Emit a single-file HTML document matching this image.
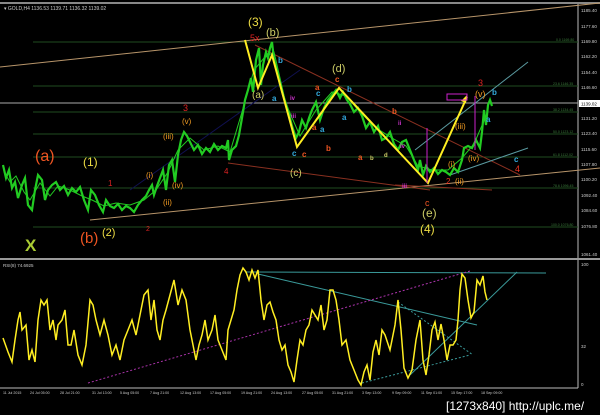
<!DOCTYPE html>
<html><head><style>
html,body{margin:0;padding:0;background:#000;width:600px;height:415px;overflow:hidden}
svg{display:block}
text{font-family:"Liberation Sans",sans-serif}
</style></head><body>
<svg width="600" height="415" viewBox="0 0 600 415" xmlns="http://www.w3.org/2000/svg">
<rect width="600" height="415" fill="#000"/>
<line x1="0" y1="3" x2="600" y2="3" stroke="#888" stroke-width="2"/>
<text x="4" y="10" fill="#ccc" font-size="5">▾ GOLD,H4 1136.53 1139.71 1136.32 1139.02</text>
<line x1="578" y1="4" x2="578" y2="388" stroke="#bbb" stroke-width="1"/>
<line x1="0" y1="259" x2="600" y2="259" stroke="#999" stroke-width="2"/>
<line x1="0" y1="388" x2="578" y2="388" stroke="#bbb" stroke-width="1"/>
<g fill="#ccc" font-size="4.5">
<text x="581" y="12">1185.40</text><text x="581" y="28">1177.60</text><text x="581" y="43">1169.80</text>
<text x="581" y="58">1162.20</text><text x="581" y="74">1154.40</text><text x="581" y="89">1146.60</text>
<text x="581" y="120">1131.20</text><text x="581" y="135">1123.40</text><text x="581" y="151">1115.60</text>
<text x="581" y="166">1107.80</text><text x="581" y="181">1100.20</text><text x="581" y="197">1092.40</text>
<text x="581" y="212">1084.60</text><text x="581" y="228">1076.80</text><text x="581" y="256">1061.40</text>
<text x="581" y="266">100</text><text x="581" y="348">32</text><text x="581" y="386">0</text>
</g>
<rect x="579" y="100" width="21" height="7" fill="#fff"/>
<text x="581" y="105.5" fill="#000" font-size="4.5">1139.02</text>
<g stroke="#1f4d1f" stroke-width="1">
<line x1="33" y1="42" x2="578" y2="42"/><line x1="33" y1="86" x2="578" y2="86"/>
<line x1="33" y1="112" x2="578" y2="112"/><line x1="33" y1="134" x2="578" y2="134"/>
<line x1="33" y1="157" x2="578" y2="157"/><line x1="33" y1="188" x2="578" y2="188"/>
<line x1="33" y1="227" x2="578" y2="227"/>
</g>
<g fill="#3a7a3a" font-size="3.5">
<text x="556" y="41">0.0 1169.80</text><text x="553" y="85">23.6 1146.35</text><text x="553" y="111">38.2 1134.45</text>
<text x="553" y="133">50.0 1123.12</text><text x="553" y="156">61.8 1112.02</text><text x="553" y="187">78.6 1096.45</text>
<text x="551" y="226">100.0 1076.80</text>
</g>
<line x1="0" y1="103" x2="578" y2="103" stroke="#aaa" stroke-width="1"/>
<g fill="none" stroke-width="1">
<line x1="0" y1="67" x2="600" y2="3" stroke="#b8956a"/>
<line x1="90" y1="220" x2="600" y2="168" stroke="#b8956a"/>
<line x1="255" y1="45" x2="520" y2="175" stroke="#8a3020"/>
<line x1="228" y1="163" x2="430" y2="190" stroke="#8a3020"/>
<line x1="395" y1="185" x2="492" y2="190" stroke="#8a3020"/>
<line x1="415" y1="150" x2="528" y2="62" stroke="#5a9aa0"/>
<line x1="450" y1="175" x2="528" y2="148" stroke="#5a9aa0"/>
<line x1="300" y1="70" x2="130" y2="190" stroke="#101050"/>
</g>
<polyline fill="none" stroke="#22cc22" stroke-width="2.2" points="3,165 6,178 9,170 12,188 15,182 18,198 22,185 25,178 28,205 32,210 35,190 38,175 42,180 45,200 48,190 52,185 56,182 60,190 64,186 68,195 72,188 76,192 80,187 84,200 88,210 91,190 95,195 99,205 103,212 106,200 110,206 114,208 118,204 122,210 126,206 130,208 134,212 138,205 142,200 146,196 149,190 152,185 154,195 157,186 160,178 163,170 166,190 169,165 172,160 175,182 178,155 181,140 184,132 187,136 190,142 194,150 198,145 202,154 206,148 210,152 214,144 218,150 222,146 226,148 228,140 229,160 232,150 236,146 239,135 242,118 245,100 248,90 251,78 253,92 256,60 259,48 261,85 263,65 266,52 268,58 270,48 272,42 274,60 277,70 280,84 284,98 288,110 292,126 296,138 299,132 302,120 306,128 309,118 312,110 316,102 320,120 324,108 328,100 332,95 336,90 340,98 343,92 347,100 350,104 354,112 358,108 362,116 366,128 370,122 374,132 378,126 382,140 386,138 390,132 394,144 398,150 402,142 406,140 410,150 414,160 418,170 420,160 423,175 426,166 430,172 434,168 438,174 442,170 446,172 450,175 454,168 458,172 462,160 464,148 468,146 472,148 476,140 480,148 482,132 484,110 486,125 488,105 490,100 492,106"/>
<polyline fill="none" stroke="#22cc22" stroke-width="1" points="4,172 10,182 16,176 24,192 30,200 40,183 50,196 58,186 70,190 82,196 92,200 104,206 116,203 130,205 144,200 156,190 168,172 178,150 190,138 204,150 218,146 230,152 242,112 254,70 264,58 274,52 286,104 300,136 316,110 332,92 346,96 360,112 376,128 392,138 406,146 418,166 432,170 448,170 462,158 474,144 486,116"/>
<polyline fill="none" stroke="#ffee22" stroke-width="2" points="245,40 258,88 272,55 297,147 339,88 428,183 467,97"/>
<polygon points="467,95 461,101 466,103" fill="#ffee22"/>
<line x1="427" y1="128" x2="427" y2="183" stroke="#cc22cc"/>
<line x1="475" y1="96" x2="475" y2="150" stroke="#cc22cc"/>
<rect x="447" y="94" width="20" height="6" fill="none" stroke="#cc22cc"/>
<g font-family="Liberation Serif,serif">
<text x="35" y="161" fill="#ee5522" font-size="16">(a)</text>
<text x="83" y="166" fill="#eedd44" font-size="12">(1)</text>
<text x="80" y="243" fill="#ee5522" font-size="15">(b)</text>
<text x="102" y="236" fill="#eedd44" font-size="11">(2)</text>
<text x="25" y="251" fill="#aacc33" font-size="17" font-weight="bold">X</text>
<text x="248" y="26" fill="#eedd44" font-size="12">(3)</text>
<text x="266" y="36" fill="#cccc66" font-size="11">(b)</text>
<text x="250" y="41" fill="#dd2222" font-size="9">5x</text>
<text x="252" y="98" fill="#cccc66" font-size="10">(a)</text>
<text x="290" y="176" fill="#cccc66" font-size="10">(c)</text>
<text x="332" y="72" fill="#cccc66" font-size="11">(d)</text>
<text x="422" y="217" fill="#cccc66" font-size="12">(e)</text>
<text x="420" y="233" fill="#eedd44" font-size="12">(4)</text>
<text x="183" y="111" fill="#dd2222" font-size="9">3</text>
<text x="182" y="124" fill="#ee9922" font-size="8">(v)</text>
<text x="163" y="139" fill="#ee9922" font-size="8">(iii)</text>
<text x="146" y="178" fill="#ee9922" font-size="8">(i)</text>
<text x="172" y="188" fill="#ee9922" font-size="8">(iv)</text>
<text x="163" y="205" fill="#ee9922" font-size="8">(ii)</text>
<text x="108" y="186" fill="#dd2222" font-size="8">1</text>
<text x="146" y="231" fill="#dd2222" font-size="7">2</text>
<text x="224" y="174" fill="#dd2222" font-size="8">4</text>
<text x="478" y="86" fill="#dd2222" font-size="9">3</text>
<text x="475" y="97" fill="#ee9922" font-size="9">(v)</text>
<text x="455" y="129" fill="#ee9922" font-size="8">(iii)</text>
<text x="448" y="167" fill="#ee9922" font-size="8">(i)</text>
<text x="468" y="161" fill="#ee9922" font-size="8">(iv)</text>
<text x="455" y="184" fill="#ee9922" font-size="8">(ii)</text>
<text x="515" y="172" fill="#ee3322" font-size="9">4</text>
<text x="446" y="184" fill="#ee3322" font-size="8">2</text>
<text x="425" y="206" fill="#ee5522" font-size="9">c</text>
</g>
<g font-size="8" font-weight="bold">
<text x="278" y="63" fill="#33aadd">b</text><text x="272" y="101" fill="#33aadd">a</text>
<text x="292" y="156" fill="#33aadd">c</text><text x="492" y="95" fill="#33aadd">b</text>
<text x="486" y="122" fill="#33aadd">a</text><text x="514" y="162" fill="#33aadd">c</text>
<text x="347" y="92" fill="#33aadd">b</text><text x="316" y="96" fill="#33aadd">c</text>
<text x="320" y="132" fill="#33aadd">a</text><text x="342" y="120" fill="#33aadd">a</text>
<text x="302" y="157" fill="#ee5522">c</text><text x="312" y="130" fill="#ee5522">a</text>
<text x="335" y="82" fill="#ee5522">c</text><text x="315" y="90" fill="#ee5522">a</text>
<text x="326" y="151" fill="#ee5522">b</text><text x="358" y="160" fill="#ee5522">a</text>
<text x="392" y="114" fill="#ee5522">b</text>
<text x="370" y="160" fill="#cccc66" font-size="6">b</text><text x="384" y="157" fill="#cccc66" font-size="6">d</text>
<text x="291" y="118" fill="#cc33cc" font-size="6">iii</text><text x="290" y="100" fill="#cc33cc" font-size="6">iv</text>
<text x="400" y="148" fill="#cc33cc" font-size="6">iv</text><text x="398" y="125" fill="#cc33cc" font-size="6">ii</text>
<text x="402" y="188" fill="#cc33cc" font-size="6">iii</text>
</g>
<text x="3" y="267" fill="#ccc" font-size="4.5">RSI(8) 74.6925</text>
<g fill="none" stroke-width="1">
<line x1="245" y1="272" x2="546" y2="273" stroke="#3a9a9a"/>
<line x1="258" y1="274" x2="477" y2="325" stroke="#3a9a9a"/>
<line x1="410" y1="375" x2="517" y2="272" stroke="#3a9a9a"/>
<line x1="88" y1="383" x2="470" y2="271" stroke="#aa33aa" stroke-dasharray="2,2"/>
<line x1="362" y1="383" x2="470" y2="355" stroke="#3a9a9a" stroke-dasharray="2,2"/>
<line x1="398" y1="302" x2="473" y2="355" stroke="#3a9a9a" stroke-dasharray="2,2"/>
</g>
<polyline fill="none" stroke="#ffee22" stroke-width="1.5" points="3,338 8,352 12,362 15,340 18,320 20,312 22,330 26,325 29,360 32,350 35,362 38,320 41,300 44,305 47,300 50,330 53,320 56,340 58,325 62,320 65,310 68,345 71,345 74,330 78,355 82,365 86,345 90,300 93,305 96,320 100,335 104,320 108,335 112,355 116,345 120,360 124,340 128,330 132,320 136,335 140,315 144,295 148,290 151,320 154,300 157,330 160,340 163,320 166,310 170,295 174,280 178,305 182,290 186,300 190,330 193,345 196,360 199,345 202,335 205,320 208,340 212,330 215,315 218,340 222,350 226,360 228,330 231,320 234,310 237,290 240,275 243,268 246,272 249,280 252,270 255,278 258,270 261,300 264,320 267,305 270,302 273,312 276,320 279,340 282,350 285,345 288,365 291,372 294,382 297,360 300,340 303,345 306,330 309,325 312,310 315,315 318,320 321,305 324,330 327,320 330,290 333,290 336,300 339,320 342,345 346,340 350,360 354,370 358,380 361,385 364,372 367,365 370,380 373,352 376,340 379,355 382,330 385,335 390,350 395,325 398,300 401,330 404,368 408,378 412,370 416,340 418,330 420,320 423,360 426,375 429,355 432,330 435,322 438,340 441,324 444,340 447,360 450,345 453,345 456,340 458,320 460,290 462,274 465,278 468,300 471,318 474,312 477,280 480,285 483,276 485,292 487,300"/>
<g fill="#ccc" font-size="3.6">
<text x="3" y="394">11 Jul 2015</text><text x="30" y="394">24 Jul 05:00</text><text x="60" y="394">28 Jul 21:00</text>
<text x="92" y="394">31 Jul 13:00</text><text x="120" y="394">5 Aug 05:00</text><text x="150" y="394">7 Aug 21:00</text>
<text x="180" y="394">12 Aug 13:00</text><text x="210" y="394">17 Aug 05:00</text><text x="241" y="394">19 Aug 21:00</text>
<text x="271" y="394">24 Aug 13:00</text><text x="302" y="394">27 Aug 05:00</text><text x="332" y="394">31 Aug 21:00</text>
<text x="362" y="394">3 Sep 13:00</text><text x="392" y="394">9 Sep 09:00</text><text x="421" y="394">11 Sep 01:00</text>
<text x="451" y="394">15 Sep 17:00</text><text x="481" y="394">18 Sep 09:00</text>
</g>
<text x="446" y="410" fill="#fff" font-size="12">[1273x840] http://uplc.me/</text>
</svg>
</body></html>
